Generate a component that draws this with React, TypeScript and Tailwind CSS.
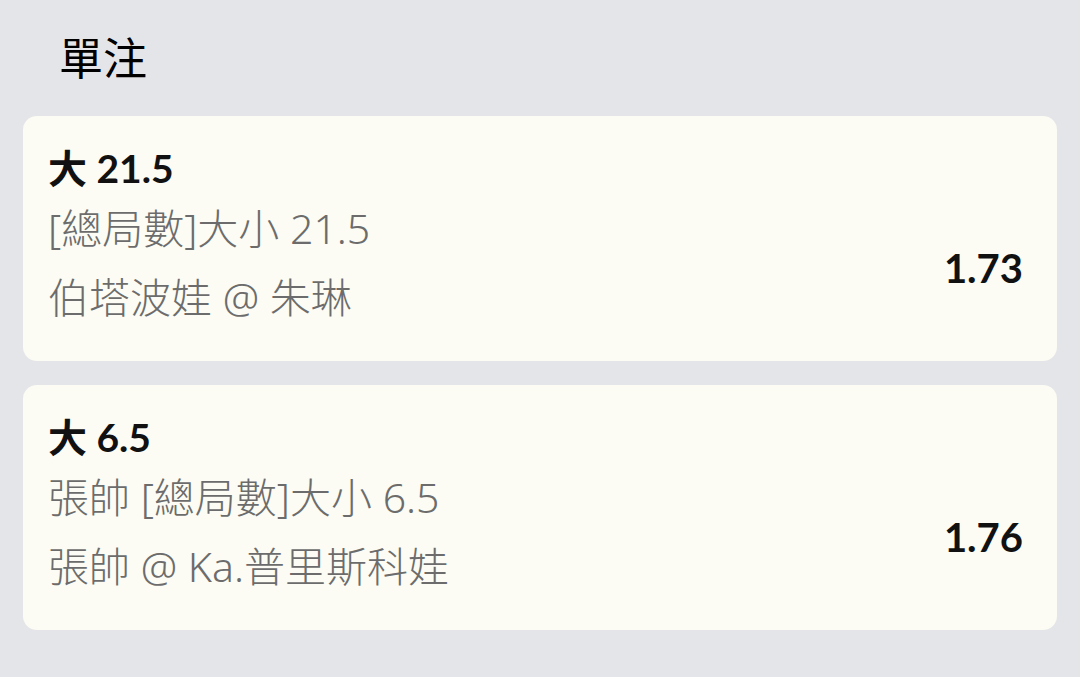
const bets = [
  {
    id: 1,
    title: '大 21.5',
    market: '[總局數]大小 21.5',
    match: '伯塔波娃 @ 朱琳',
    odds: '1.73',
  },
  {
    id: 2,
    title: '大 6.5',
    market: '張帥 [總局數]大小 6.5',
    match: '張帥 @ Ka.普里斯科娃',
    odds: '1.76',
  },
];

export default function App() {
  return (
    <div
      className="w-[1080px] h-[677px] bg-[#e4e5e9] overflow-hidden"
      style={{ fontFamily: 'Lato, "Noto Sans CJK TC", sans-serif' }}
    >
      <div className="h-[116px] pl-[59px] pt-[28px]">
        <h1 className="text-[44px] leading-[60px] text-black">單注</h1>
      </div>
      <div className="flex flex-col gap-[24px] px-[23px]">
        {bets.map((bet) => (
          <div
            key={bet.id}
            className="h-[245px] bg-[#fcfcf4] rounded-[14px] flex items-start justify-between pt-[28px] pl-[25px] pr-[34px]"
          >
            <div className="flex flex-col">
              <div className="text-[39px] leading-[48px] font-bold text-[#111111]">{bet.title}</div>
              <div
                className="text-[41px] leading-[48px] mt-[12px] font-light text-[#6c6c6c]"
                style={{ fontFamily: '"Noto Sans", "Noto Sans CJK TC", sans-serif' }}
              >
                {bet.market}
              </div>
              <div
                className="text-[41px] leading-[48px] mt-[21px] font-light text-[#6c6c6c]"
                style={{ fontFamily: '"Noto Sans", "Noto Sans CJK TC", sans-serif' }}
              >
                {bet.match}
              </div>
            </div>
            <div className="text-[40px] leading-[48px] mt-[100px] font-bold text-[#111111]">{bet.odds}</div>
          </div>
        ))}
      </div>
    </div>
  );
}
